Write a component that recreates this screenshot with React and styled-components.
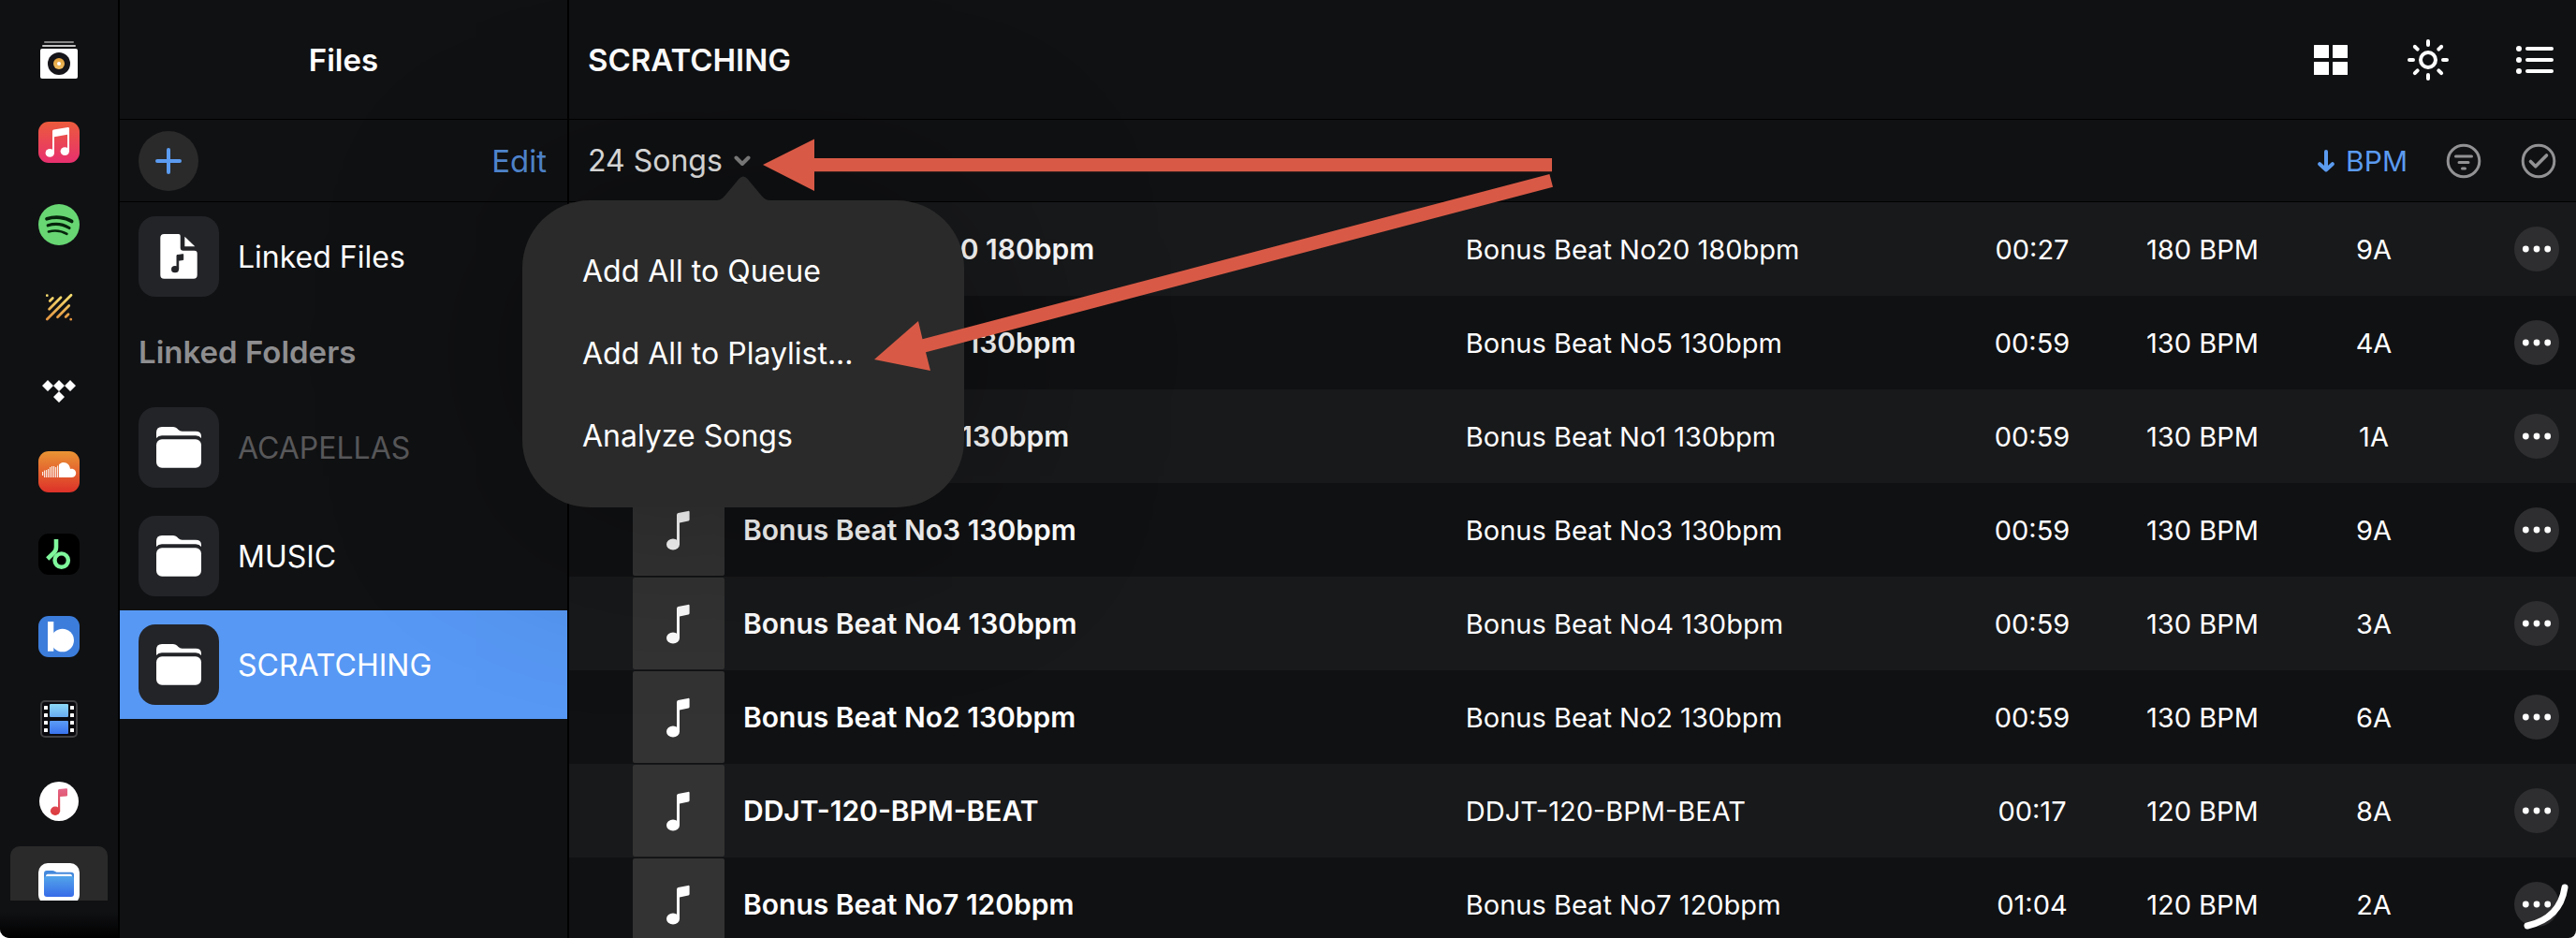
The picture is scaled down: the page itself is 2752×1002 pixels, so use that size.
import styled, { createGlobalStyle } from "styled-components"

const GlobalStyle = createGlobalStyle`
  * {
    box-sizing: border-box;
  }
  body {
    margin: 0;
    background: white;
    font-family: Inter, "Liberation Sans", sans-serif;
  }
  button {
    font: inherit;
    color: inherit;
    background: none;
    border: none;
    padding: 0;
    cursor: pointer;
  }
  svg {
    display: block;
    flex: none;
  }
`

const Container = styled.div`
  position: relative;
  display: flex;
  height: 100vh;
  overflow: hidden;
  background: #101113;
  color: white;
  border-radius: 0 0 8px 10px;
`

/* source rail */
const Rail = styled.nav`
  display: flex;
  flex-direction: column;
  width: 128px;
  flex: none;
  border-right: 2px solid black;
`

const RailList = styled.div`
  flex: 1;
  min-height: 0;
  overflow: hidden;
  padding-top: 20px;
`

const RailFade = styled.div`
  height: 40px;
  background: linear-gradient(#101113 30%, black);
`

const RailButton = styled.button`
  display: flex;
  align-items: center;
  justify-content: center;
  width: 104px;
  height: 80px;
  margin: 4px 11px 8px;
  border-radius: 10px;
  background: ${(props) => (props.$active ? "#2a2a2a" : "transparent")};
`

/* files column and songs column */
const Panel = styled.aside`
  display: flex;
  flex-direction: column;
  width: 480px;
  flex: none;
  border-right: 2px solid black;
`

const Main = styled.main`
  display: flex;
  flex-direction: column;
  flex: 1;
  min-width: 0;
`

const Header = styled.header`
  display: flex;
  align-items: center;
  justify-content: ${(props) => (props.$center ? "center" : "space-between")};
  height: 128px;
  flex: none;
  padding: ${(props) => (props.$center ? "0 20px" : "0 24px 0 20px")};
  border-bottom: 1px solid black;
`

const Title = styled.h1`
  margin: 0;
  font-size: 33px;
  font-weight: 600;
  line-height: 40px;
`

const Toolbar = styled.div`
  display: flex;
  align-items: center;
  justify-content: space-between;
  height: 88px;
  flex: none;
  padding: 0 20px;
  border-bottom: 1px solid black;
`

const Actions = styled.div`
  display: flex;
  align-items: center;
  gap: ${(props) => props.$gap};
`

const AddButton = styled.button`
  display: flex;
  align-items: center;
  justify-content: center;
  width: 64px;
  height: 64px;
  border-radius: 50%;
  background: #2a2a2a;
`

const EditButton = styled.button`
  padding: 0 2px;
  color: #538bd6;
  font-size: 33px;
  line-height: 40px;
`

const SortButton = styled.button`
  display: flex;
  align-items: center;
  gap: 12px;
  color: #5b9bf0;
  font-size: 30px;
  line-height: 40px;
`

const FileRow = styled.button`
  display: flex;
  align-items: center;
  gap: 20px;
  width: 100%;
  height: 116px;
  padding: 0 20px;
  font-size: 32px;
  text-align: left;
  color: ${(props) => (props.$dim ? "#58585a" : "white")};
  background: ${(props) => (props.$active ? "#5798f4" : "transparent")};
`

const FileTile = styled.span`
  width: 86px;
  height: 86px;
  flex: none;
  border-radius: 18px;
  background: #232428;
`

const SectionTitle = styled.h2`
  margin: 0;
  padding: 0 20px;
  font-size: 33px;
  font-weight: 600;
  line-height: 88px;
  color: #8e8e90;
`

/* songs menu */
const MenuAnchor = styled.div`
  position: relative;
  z-index: 2;
`

const SongsButton = styled.button`
  display: flex;
  align-items: center;
  gap: 12px;
  font-size: 32px;
  line-height: 40px;
  color: #ececec;
`

const Menu = styled.div`
  position: absolute;
  top: 62px;
  left: -70px;
  width: 472px;
  padding: 32px 0;
  border-radius: 72px;
  background: #2a2a2a;
  box-shadow: 0 0 200px 20px rgba(0, 0, 0, 0.3);
`

const MenuTail = styled.svg`
  position: absolute;
  top: -26px;
  left: 206px;
`

const MenuItem = styled.button`
  display: block;
  width: 100%;
  height: 88px;
  padding: 0 64px;
  font-size: 32px;
  text-align: left;
`

/* songs list */
const ListWrap = styled.div`
  flex: 1;
  min-height: 0;
  overflow: hidden;
`

const SongTable = styled.table`
  width: 100%;
  table-layout: fixed;
  border-collapse: collapse;
`

const SongRow = styled.tr`
  height: 100px;
  &:nth-child(odd) {
    background: #18191b;
  }
`

const Cell = styled.td`
  padding: ${(props) => props.$pad || "0"};
  width: ${(props) => props.$width || "auto"};
  text-align: ${(props) => props.$align || "left"};
  font-size: ${(props) => (props.$strong ? "30px" : "29px")};
  font-weight: ${(props) => (props.$strong ? 600 : 400)};
  white-space: nowrap;
`

const Artwork = styled.div`
  width: 98px;
  height: 98px;
  border-radius: 2px;
  background: #333333;
`

const MoreButton = styled.button`
  display: inline-flex;
  align-items: center;
  justify-content: center;
  width: 48px;
  height: 48px;
  border-radius: 50%;
  background: #2e2e30;
  vertical-align: middle;
`

/* marks drawn over the page */
const Arrows = styled.svg`
  position: absolute;
  top: 0;
  left: 0;
  z-index: 3;
  pointer-events: none;
`

const CornerMark = styled.svg`
  position: absolute;
  right: 0;
  bottom: 0;
  z-index: 3;
  pointer-events: none;
`

const Icon = ({ size = 44, children }) => (
  <svg width={size} height={size} viewBox={`0 0 ${size} ${size}`} fill="none" aria-hidden="true">
    {children}
  </svg>
)

const Gradient = ({ id, from, to }) => (
  <linearGradient id={id} x1="0" y1="0" x2="0" y2="1">
    <stop offset="0" stopColor={from} />
    <stop offset="1" stopColor={to} />
  </linearGradient>
)

const LibraryIcon = () => (
  <Icon>
    <Gradient id="gold" from="#e3a23c" to="#f0bd62" />
    <rect x="6" y="2" width="32" height="2" rx="1" fill="#868686" />
    <rect x="4" y="6" width="36" height="2" rx="1" fill="#c4c4c4" />
    <rect x="2" y="10" width="40" height="32" rx="2" fill="white" />
    <circle cx="22" cy="26" r="12" fill="#15151a" />
    <circle cx="22" cy="26" r="6" fill="url(#gold)" />
    <circle cx="22" cy="26" r="2" fill="white" />
  </Icon>
)

const AppleMusicIcon = () => (
  <Icon>
    <Gradient id="apple" from="#ec5b3c" to="#e8306f" />
    <rect width="44" height="44" rx="11" fill="url(#apple)" />
    <path d="M15 10.2Q15 8.8 16.4 8.5L31.5 6Q33 5.8 33 7.2V31.5H31V13.8L17 16.2V33.5H15Z" fill="white" />
    <ellipse cx="12.3" cy="33.4" rx="4.7" ry="4.3" fill="white" />
    <ellipse cx="28.3" cy="31.6" rx="4.7" ry="4.3" fill="white" />
  </Icon>
)

const SpotifyIcon = () => (
  <Icon>
    <circle cx="22" cy="22" r="22" fill="#67d673" />
    <g stroke="#06240c" strokeLinecap="round">
      <path d="M9 15.8C18 13 28.5 14 35.6 18.4" strokeWidth="3.8" />
      <path d="M10.2 22.8C17.5 20.6 26.5 21.6 33 25.5" strokeWidth="3.2" />
      <path d="M10.9 29.4C17.5 27.7 24.5 28.4 30.4 31.9" strokeWidth="2.6" />
    </g>
  </Icon>
)

const BeatsourceIcon = () => (
  <Icon>
    <linearGradient id="source" x1="0" y1="8" x2="0" y2="36" gradientUnits="userSpaceOnUse">
      <stop offset="0" stopColor="#f6e171" />
      <stop offset="1" stopColor="#e3923f" />
    </linearGradient>
    <path
      d="M9.3 35L35 9.3M9.3 9.7V9.71M34.7 35.2V35.21M12.3 15.5L15.3 12.5M11.6 24.2L24 11.8M20.5 32.8L32.7 20.6M29.2 32.5L32 29.7"
      stroke="url(#source)"
      strokeWidth="2.8"
      strokeLinecap="round"
    />
  </Icon>
)

const TidalIcon = () => (
  <Icon>
    <path
      d="M10 12L16 18L10 24L4 18ZM22 12L28 18L22 24L16 18ZM34 12L40 18L34 24L28 18ZM22 24L28 30L22 36L16 30Z"
      fill="white"
    />
  </Icon>
)

const SoundCloudIcon = () => (
  <Icon>
    <Gradient id="cloud" from="#ea9534" to="#dd3129" />
    <rect width="44" height="44" rx="11" fill="url(#cloud)" />
    <path
      d="M4.6 22V26M6.6 20.5V28M8.6 20V28M10.6 19V28M12.6 17V28M14.6 16V28M16.6 16V28M18.6 17V28M20.6 15.5V28"
      stroke="white"
      strokeWidth="1.2"
      opacity="0.85"
    />
    <path d="M22 28V14.2C23.5 12.6 25.5 12 27 12C31 12 33.7 15 34 19C37.5 18 40.2 20.5 40.2 23.5C40.2 26 38.2 28 35.7 28Z" fill="white" />
  </Icon>
)

const BeatportIcon = () => (
  <Icon>
    <rect width="44" height="44" rx="11" fill="black" />
    <circle cx="24.7" cy="28.6" r="7.2" stroke="#7ff79c" strokeWidth="4.4" />
    <path d="M19 6V14.5Q19 18 16.5 20.5L9.7 27" stroke="#7ff79c" strokeWidth="4.6" />
  </Icon>
)

const BandIcon = () => (
  <Icon>
    <rect width="44" height="44" rx="11" fill="#3c7ddb" />
    <rect x="10" y="6" width="6.3" height="31.7" fill="white" />
    <circle cx="25.7" cy="26" r="12.3" fill="white" />
  </Icon>
)

const FilmIcon = () => (
  <Icon>
    <Gradient id="frameTop" from="#8cd9f6" to="#68aaf0" />
    <Gradient id="frameBottom" from="#5c9df6" to="#3a73ee" />
    <rect x="3" y="3" width="38" height="38" rx="4" fill="#0a0a0e" stroke="#404043" strokeWidth="2" />
    {[8, 16, 24, 32].map((y) => (
      <g key={y} fill="white">
        <rect x="6" y={y} width="4" height="4" rx="0.5" />
        <rect x="34" y={y} width="4" height="4" rx="0.5" />
      </g>
    ))}
    <rect x="12" y="6" width="20" height="14" rx="1" fill="url(#frameTop)" />
    <rect x="12" y="24" width="20" height="14" rx="1" fill="url(#frameBottom)" />
  </Icon>
)

const ItunesIcon = () => (
  <Icon>
    <linearGradient id="note" x1="0" y1="8" x2="0" y2="37" gradientUnits="userSpaceOnUse">
      <stop offset="0" stopColor="#e4668a" />
      <stop offset="1" stopColor="#dc3a3a" />
    </linearGradient>
    <circle cx="22" cy="22" r="21" fill="white" />
    <g fill="url(#note)">
      <path d="M21 10.2Q21 9 22.2 8.9L30 8.3Q31 8.2 31 9.2V15.4Q31 16.4 30 16.5L23.2 17V32.5H21Z" />
      <ellipse cx="18" cy="32.3" rx="5.1" ry="4.7" />
    </g>
  </Icon>
)

const FilesIcon = () => (
  <Icon>
    <Gradient id="files" from="#52a5ea" to="#386be8" />
    <rect width="44" height="44" rx="10" fill="white" />
    <path d="M6 11Q6 8 9 8H15Q16.5 8 18 9L19.5 9.7H35Q38 9.7 38 12.5V20H6Z" fill="#4489dc" />
    <path d="M8 15Q8 11.8 10 11.8H34Q36 11.8 36 15Z" fill="white" />
    <rect x="6" y="14" width="32" height="22" rx="3" fill="url(#files)" />
  </Icon>
)

const FolderGlyph = () => (
  <Icon size={86}>
    <path
      d="M19 33V27Q19 21 25 21H37Q39.5 21 41 22.5L42.5 24Q44.2 25.7 46.5 25.7H61Q67 25.7 67 31V33Q65 30.3 61 30.3H25Q21 30.3 19 33Z"
      fill="white"
    />
    <rect x="19" y="34.3" width="48" height="30.4" rx="6" fill="white" />
  </Icon>
)

const LinkedFileGlyph = () => (
  <Icon size={86}>
    <path
      d="M27.3 19H42.7Q44.7 19 44.7 21V33.7Q44.7 36.7 47.7 36.7H59.7Q62.7 36.7 62.7 39.7V62.7Q62.7 66.7 58.7 66.7H27.3Q23.3 66.7 23.3 62.7V23Q23.3 19 27.3 19Z"
      fill="white"
    />
    <path d="M49.3 21.7L60.3 32.3H49.3Z" fill="white" />
    <path d="M41 41.6L47.7 40.7V46.5L42.7 47.2V56.7H41Z" fill="#232428" stroke="#232428" />
    <ellipse cx="39" cy="56.7" rx="4" ry="3.6" fill="#232428" />
  </Icon>
)

const NoteGlyph = () => (
  <Icon size={98}>
    <path d="M47 33Q47 31.5 48.5 31.1L59 28.9Q60.6 28.5 60.6 30V38Q60.6 39.2 59.4 39.5L50 41.5V65H47Z" fill="white" />
    <ellipse cx="43" cy="64.5" rx="7" ry="6" fill="white" />
  </Icon>
)

const PlusGlyph = () => (
  <Icon size={28}>
    <path d="M14 2V26M2 14H26" stroke="#5b9bf0" strokeWidth="4" strokeLinecap="round" />
  </Icon>
)

const ChevronGlyph = () => (
  <svg width="18" height="12" viewBox="0 0 18 12" fill="none" aria-hidden="true">
    <path d="M2.5 2.5L9 9L15.5 2.5" stroke="#858585" strokeWidth="4" strokeLinecap="round" strokeLinejoin="round" />
  </svg>
)

const GridGlyph = () => (
  <svg width="36" height="32" viewBox="0 0 36 32" fill="white" aria-hidden="true">
    <rect width="16" height="14" rx="0.5" />
    <rect x="20" width="16" height="14" rx="0.5" />
    <rect y="18" width="16" height="14" rx="0.5" />
    <rect x="20" y="18" width="16" height="14" rx="0.5" />
  </svg>
)

const SunGlyph = () => (
  <Icon>
    <circle cx="22" cy="22" r="8" stroke="white" strokeWidth="4" />
    {[0, 45, 90, 135, 180, 225, 270, 315].map((angle) => (
      <path key={angle} d="M22 2V6" transform={`rotate(${angle} 22 22)`} stroke="white" strokeWidth="4" strokeLinecap="round" />
    ))}
  </Icon>
)

const ListGlyph = () => (
  <svg width="48" height="30" viewBox="0 0 48 30" aria-hidden="true">
    {[3, 15, 27].map((y) => (
      <g key={y}>
        <circle cx="11" cy={y} r="3" fill="white" />
        <path d={`M20 ${y}H46`} stroke="white" strokeWidth="4" strokeLinecap="round" />
      </g>
    ))}
  </svg>
)

const SortGlyph = () => (
  <svg width="18" height="24" viewBox="0 0 18 24" fill="none" aria-hidden="true">
    <path d="M9 2V21M2.2 15.2L9 21.5L15.8 15.2" stroke="#5b9bf0" strokeWidth="4" strokeLinecap="round" strokeLinejoin="round" />
  </svg>
)

const FilterGlyph = () => (
  <Icon size={40}>
    <g stroke="#929294" strokeWidth="3" strokeLinecap="round">
      <circle cx="20" cy="20" r="16.8" />
      <path d="M11.5 15H28.5M15 21.5H25M18.5 28H21.5" />
    </g>
  </Icon>
)

const CheckGlyph = () => (
  <Icon size={40}>
    <g stroke="#929294" strokeWidth="3" strokeLinecap="round" strokeLinejoin="round">
      <circle cx="20" cy="20" r="16.8" />
      <path d="M11.5 20.5L16.8 25.8L28.5 14" strokeWidth="3.6" />
    </g>
  </Icon>
)

const DotsGlyph = () => (
  <svg width="32" height="8" viewBox="0 0 32 8" fill="white" aria-hidden="true">
    <circle cx="4.3" cy="4" r="3.4" />
    <circle cx="16" cy="4" r="3.4" />
    <circle cx="27.7" cy="4" r="3.4" />
  </svg>
)

const sources = [
  { name: "Library", icon: <LibraryIcon /> },
  { name: "Apple Music", icon: <AppleMusicIcon /> },
  { name: "Spotify", icon: <SpotifyIcon /> },
  { name: "Beatsource", icon: <BeatsourceIcon /> },
  { name: "Tidal", icon: <TidalIcon /> },
  { name: "SoundCloud", icon: <SoundCloudIcon /> },
  { name: "Beatport", icon: <BeatportIcon /> },
  { name: "Band", icon: <BandIcon /> },
  { name: "Videos", icon: <FilmIcon /> },
  { name: "iTunes", icon: <ItunesIcon /> },
  { name: "Files", icon: <FilesIcon />, active: true },
]

const folders = [
  { name: "ACAPELLAS", dim: true },
  { name: "MUSIC" },
  { name: "SCRATCHING", active: true },
]

const songs = [
  { title: "Bonus Beat No20 180bpm", time: "00:27", bpm: 180, tone: "9A" },
  { title: "Bonus Beat No5 130bpm", time: "00:59", bpm: 130, tone: "4A" },
  { title: "Bonus Beat No1 130bpm", time: "00:59", bpm: 130, tone: "1A" },
  { title: "Bonus Beat No3 130bpm", time: "00:59", bpm: 130, tone: "9A" },
  { title: "Bonus Beat No4 130bpm", time: "00:59", bpm: 130, tone: "3A" },
  { title: "Bonus Beat No2 130bpm", time: "00:59", bpm: 130, tone: "6A" },
  { title: "DDJT-120-BPM-BEAT", time: "00:17", bpm: 120, tone: "8A" },
  { title: "Bonus Beat No7 120bpm", time: "01:04", bpm: 120, tone: "2A" },
]

const Song = ({ song }) => {
  return (
    <SongRow>
      <Cell $width="166px" $pad="0 0 0 68px">
        <Artwork>
          <NoteGlyph />
        </Artwork>
      </Cell>
      <Cell $width="36%" $pad="0 20px" $strong>{song.title}</Cell>
      <Cell $pad="0 20px">{song.title}</Cell>
      <Cell $width="160px" $align="center">{song.time}</Cell>
      <Cell $width="204px" $align="center">{song.bpm} BPM</Cell>
      <Cell $width="162px" $align="center">{song.tone}</Cell>
      <Cell $width="135px" $pad="0 18px 0 0" $align="right">
        <MoreButton aria-label={`More for ${song.title}`}>
          <DotsGlyph />
        </MoreButton>
      </Cell>
    </SongRow>
  )
}

const SongsMenu = () => {
  return (
    <MenuAnchor>
      <SongsButton aria-haspopup="menu" aria-expanded="true">
        24 Songs
        <ChevronGlyph />
      </SongsButton>
      <Menu role="menu">
        <MenuTail width="60" height="27" viewBox="0 0 60 27" aria-hidden="true">
          <path d="M0 27V26C5 26 7 25 10.5 21L25.5 3Q30 -2 34.5 3L49.5 21C53 25 55 26 60 26V27Z" fill="#2a2a2a" />
        </MenuTail>
        <MenuItem role="menuitem">Add All to Queue</MenuItem>
        <MenuItem role="menuitem">Add All to Playlist...</MenuItem>
        <MenuItem role="menuitem">Analyze Songs</MenuItem>
      </Menu>
    </MenuAnchor>
  )
}

const App = () => {
  return (
    <Container>
      <GlobalStyle />
      <Rail>
        <RailList>
          {sources.map((source) => (
            <RailButton key={source.name} aria-label={source.name} $active={source.active}>
              {source.icon}
            </RailButton>
          ))}
        </RailList>
        <RailFade />
      </Rail>

      <Panel>
        <Header $center>
          <Title>Files</Title>
        </Header>
        <Toolbar>
          <AddButton aria-label="Add">
            <PlusGlyph />
          </AddButton>
          <EditButton>Edit</EditButton>
        </Toolbar>
        <FileRow>
          <FileTile>
            <LinkedFileGlyph />
          </FileTile>
          Linked Files
        </FileRow>
        <SectionTitle>Linked Folders</SectionTitle>
        {folders.map((folder) => (
          <FileRow key={folder.name} $dim={folder.dim} $active={folder.active}>
            <FileTile>
              <FolderGlyph />
            </FileTile>
            {folder.name}
          </FileRow>
        ))}
      </Panel>

      <Main>
        <Header>
          <Title>SCRATCHING</Title>
          <Actions $gap="64px">
            <button aria-label="Grid view"><GridGlyph /></button>
            <button aria-label="Brightness"><SunGlyph /></button>
            <button aria-label="List view"><ListGlyph /></button>
          </Actions>
        </Header>
        <Toolbar>
          <SongsMenu />
          <Actions $gap="40px">
            <SortButton>
              <SortGlyph />
              BPM
            </SortButton>
            <button aria-label="Filter"><FilterGlyph /></button>
            <button aria-label="Select"><CheckGlyph /></button>
          </Actions>
        </Toolbar>
        <ListWrap>
          <SongTable aria-label="Songs">
            <tbody>
              {songs.map((song) => (
                <Song key={song.title} song={song} />
              ))}
            </tbody>
          </SongTable>
        </ListWrap>
      </Main>

      <Arrows width="1700" height="420" viewBox="0 0 1700 420" fill="#d85a46" aria-hidden="true">
        <path d="M815 176L870 148.5V169H1658V183.3H870V204Z" />
        <path d="M934 384L981 343L985.5 362.3L1655.4 186L1659 199.7L989 376.3L994 396Z" />
      </Arrows>
      <CornerMark width="64" height="64" viewBox="0 0 64 64" fill="none" aria-hidden="true">
        <path d="M52 10Q47 43 12 51" stroke="white" strokeWidth="7" strokeLinecap="round" />
      </CornerMark>
    </Container>
  )
}

export default App
